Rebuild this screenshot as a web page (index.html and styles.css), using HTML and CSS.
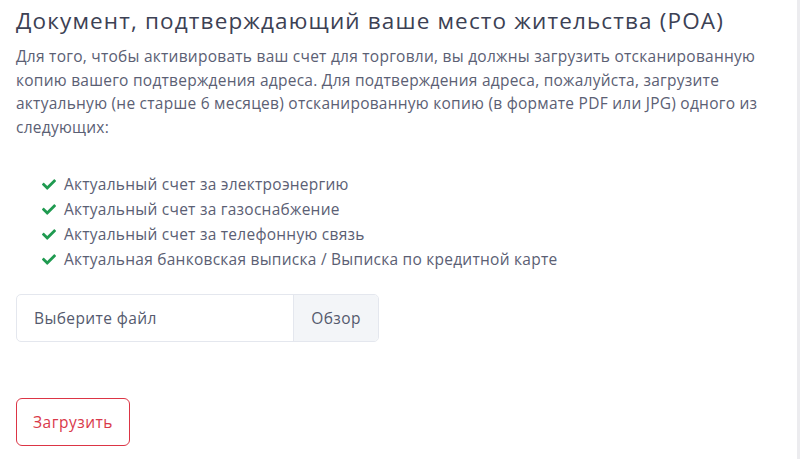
FILE: index.html
```html
<!DOCTYPE html>
<html lang="ru">
<head>
<meta charset="utf-8">
<title>POA</title>
<link rel="stylesheet" href="styles.css">
</head>
<body>
<div class="card">
  <h1 class="title">Документ, подтверждающий ваше место жительства (POA)</h1>
  <p class="intro">Для того, чтобы активировать ваш счет для торговли, вы должны загрузить отсканированную копию вашего подтверждения адреса. Для подтверждения адреса, пожалуйста, загрузите актуальную (не старше 6 месяцев) отсканированную копию (в формате PDF или JPG) одного из следующих:</p>
  <ul class="docs">
    <li><svg class="check" viewBox="0 0 512 400"><path d="M173.898 383.404l-166.4-166.4c-9.997-9.997-9.997-26.206 0-36.204l36.203-36.204c9.997-9.998 26.207-9.998 36.204 0L192 256.69 432.095 16.596c9.997-9.997 26.207-9.997 36.204 0l36.203 36.204c9.997 9.997 9.997 26.206 0 36.204l-294.4 294.401c-9.998 9.997-26.207 9.997-36.204-.001z"/></svg>Актуальный счет за электроэнергию</li>
    <li><svg class="check" viewBox="0 0 512 400"><path d="M173.898 383.404l-166.4-166.4c-9.997-9.997-9.997-26.206 0-36.204l36.203-36.204c9.997-9.998 26.207-9.998 36.204 0L192 256.69 432.095 16.596c9.997-9.997 26.207-9.997 36.204 0l36.203 36.204c9.997 9.997 9.997 26.206 0 36.204l-294.4 294.401c-9.998 9.997-26.207 9.997-36.204-.001z"/></svg>Актуальный счет за газоснабжение</li>
    <li><svg class="check" viewBox="0 0 512 400"><path d="M173.898 383.404l-166.4-166.4c-9.997-9.997-9.997-26.206 0-36.204l36.203-36.204c9.997-9.998 26.207-9.998 36.204 0L192 256.69 432.095 16.596c9.997-9.997 26.207-9.997 36.204 0l36.203 36.204c9.997 9.997 9.997 26.206 0 36.204l-294.4 294.401c-9.998 9.997-26.207 9.997-36.204-.001z"/></svg>Актуальный счет за телефонную связь</li>
    <li><svg class="check" viewBox="0 0 512 400"><path d="M173.898 383.404l-166.4-166.4c-9.997-9.997-9.997-26.206 0-36.204l36.203-36.204c9.997-9.998 26.207-9.998 36.204 0L192 256.69 432.095 16.596c9.997-9.997 26.207-9.997 36.204 0l36.203 36.204c9.997 9.997 9.997 26.206 0 36.204l-294.4 294.401c-9.998 9.997-26.207 9.997-36.204-.001z"/></svg>Актуальная банковская выписка / Выписка по кредитной карте</li>
  </ul>
  <div class="file">
    <span class="file-label">Выберите файл</span>
    <span class="file-browse">Обзор</span>
  </div>
  <button class="upload" type="button">Загрузить</button>
</div>
</body>
</html>
```

FILE: styles.css
```css
html, body {
  margin: 0;
  padding: 0;
  background: #ececef;
  height: 100%;
}
body {
  font-family: "Open Sans", Roboto, "Liberation Sans", Arial, sans-serif;
  color: #5b6074;
}
.card {
  width: 797px;
  min-height: 100%;
  box-sizing: border-box;
  background: #ffffff;
  padding: 7px 16px 0 16px;
}
.title {
  margin: 0;
  font-size: 22.5px;
  font-weight: 400;
  line-height: 28px;
  letter-spacing: 1.15px;
  color: #3c4154;
}
.intro {
  margin: 10px 0 0 0;
  font-size: 15.5px;
  line-height: 23.6px;
  letter-spacing: 0.25px;
}
.docs {
  list-style: none;
  margin: 33px 0 0 0;
  padding: 0 0 0 26px;
  font-size: 15.5px;
  line-height: 25px;
  letter-spacing: 0.25px;
}
.docs li {
  display: flex;
  align-items: center;
}
.check {
  width: 14px;
  height: 11px;
  fill: #1f9a50;
  margin-right: 8px;
  flex: none;
}
.file {
  margin-top: 22px;
  width: 363px;
  height: 48px;
  box-sizing: border-box;
  border: 1px solid #e4e7ee;
  border-radius: 5px;
  display: flex;
  overflow: hidden;
  font-size: 15.5px;
  letter-spacing: 0.4px;
}
.file-label {
  flex: 1;
  display: flex;
  align-items: center;
  padding-left: 17px;
  color: #555a6e;
}
.file-browse {
  width: 84px;
  display: flex;
  align-items: center;
  justify-content: center;
  background: #f3f5f8;
  border-left: 1px solid #e4e7ee;
  color: #555a6e;
}
.upload {
  display: block;
  margin-top: 56px;
  width: 114px;
  height: 48px;
  box-sizing: border-box;
  border: 1px solid #dc3545;
  border-radius: 6px;
  background: #ffffff;
  color: #d9394a;
  font-family: "Open Sans", Roboto, "Liberation Sans", Arial, sans-serif;
  font-size: 15.5px;
  letter-spacing: 0.5px;
  padding: 0;
}
```
